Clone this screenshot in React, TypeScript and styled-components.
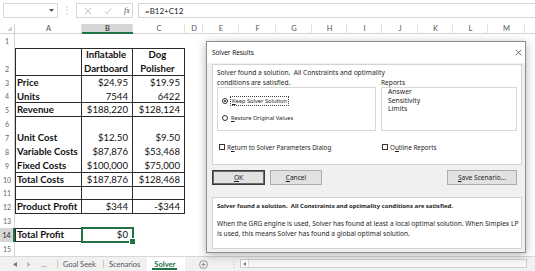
import React from "react";
import styled, { createGlobalStyle, css } from "styled-components";

const GREEN = "#217346";
const LINE = "#2a2a2a";

const GlobalStyle = createGlobalStyle`
  html, body { margin: 0; padding: 0; background: #fff; }
  body { width: 535px; height: 271px; overflow: hidden; }
  * { box-sizing: border-box; }
`;

const Page = styled.div`
  position: relative;
  width: 535px;
  height: 271px;
  overflow: hidden;
  display: flex;
  flex-direction: column;
  background: #fff;
  font-family: Lato, "Liberation Sans", sans-serif;
  color: #111;
`;

/* ---------- formula bar ---------- */
const FormulaBar = styled.div`
  height: 24px;
  flex: none;
  display: flex;
  align-items: flex-start;
  padding: 3px 0 0 3px;
`;
const NameBox = styled.div`
  width: 55px;
  height: 15px;
  border: 1px solid #d6d6d6;
  display: flex;
  align-items: center;
  justify-content: flex-end;
  padding-right: 3px;
`;
const Dots = styled.div`
  width: 18px;
  height: 15px;
  display: flex;
  align-items: center;
  justify-content: center;
`;
const FxBox = styled.div`
  width: 57px;
  height: 15px;
  border: 1px solid #d6d6d6;
  display: flex;
  align-items: center;
  padding-left: 7px;
  gap: 12px;
`;
const FxText = styled.span`
  font-family: "Liberation Serif", serif;
  font-style: italic;
  font-size: 8px;
  color: #555;
  width: 8px;
`;
const FormulaInput = styled.div`
  flex: 1;
  margin-left: 5px;
  height: 15px;
  border: 1px solid #d6d6d6;
  border-right: none;
  display: flex;
  align-items: center;
  padding-left: 6px;
  font-size: 8px;
  color: #222;
`;

/* ---------- sheet grid ---------- */
const COLS = [67, 51, 52, 18, 36, 37, 36, 35, 35, 36, 35, 35, 37, 30];
const LETTERS = "ABCDEFGHIJKLM ".split("");

const Sheet = styled.div`
  flex: none;
  height: 232px;
  display: grid;
  grid-template-columns: 15px ${COLS.map((c) => c + "px").join(" ")};
  grid-template-rows: 10px 14px 27.72px repeat(13, 13.86px);
`;

const Corner = styled.div`
  border-right: 1px solid #d4d4d4;
  border-bottom: 1px solid #d4d4d4;
  display: flex;
  align-items: flex-end;
  justify-content: flex-end;
  padding: 0 2px 2px 0;
`;

const ColHead = styled.div<{ $active?: boolean }>`
  display: flex;
  align-items: center;
  justify-content: center;
  font-size: 7.5px;
  color: #555;
  border-bottom: 1px solid #d4d4d4;
  box-shadow: inset -1px 0 0 #e2e2e2;
  ${(p) =>
    p.$active &&
    css`
      background: #d6d6d6;
      color: #1d1d1d;
      border-bottom: 2px solid ${GREEN};
    `}
`;

const RowHead = styled.div<{ $active?: boolean }>`
  display: flex;
  align-items: flex-end;
  justify-content: center;
  padding-bottom: 2px;
  font-size: 7px;
  line-height: 10px;
  color: #666;
  border-right: 1px solid #d4d4d4;
  ${(p) =>
    p.$active &&
    css`
      background: #d6d6d6;
      color: #222;
      border-right: 2px solid ${GREEN};
    `}
`;

type Edge = { $t?: boolean; $b?: boolean; $l?: boolean; $r?: boolean };
type CellProps = Edge & { $bold?: boolean; $align?: "left" | "right" | "center" };

const edgeShadow = (p: Edge) =>
  [
    p.$t && `inset 0 1px 0 ${LINE}`,
    p.$b && `inset 0 -1px 0 ${LINE}`,
    p.$l && `inset 1px 0 0 ${LINE}`,
    p.$r && `inset -1px 0 0 ${LINE}`,
  ]
    .filter(Boolean)
    .join(", ") || "none";

const Cell = styled.div<CellProps>`
  position: relative;
  display: flex;
  flex-direction: column;
  justify-content: center;
  align-items: ${(p) =>
    p.$align === "right" ? "flex-end" : p.$align === "center" ? "center" : "flex-start"};
  text-align: ${(p) => p.$align || "left"};
  padding: 0 5px 0 2px;
  font-size: 9.6px;
  line-height: 13.86px;
  font-weight: ${(p) => (p.$bold ? 700 : 400)};
  white-space: nowrap;
  box-shadow: ${edgeShadow};
`;

const SelectedCell = styled(Cell)`
  &::after {
    content: "";
    position: absolute;
    left: -1px;
    top: -1px;
    right: -1px;
    bottom: -1px;
    border: 2px solid ${GREEN};
  }
  &::before {
    content: "";
    position: absolute;
    right: -3px;
    bottom: -3px;
    width: 5px;
    height: 5px;
    background: ${GREEN};
    border: 1px solid #fff;
    z-index: 1;
  }
`;

/* ---------- sheet tabs ---------- */
const TabBar = styled.div`
  flex: none;
  height: 15px;
  display: flex;
  align-items: stretch;
  background: #f1f1f1;
  border-top: 1px solid #d6d6d6;
  font-size: 7.5px;
  color: #555;
`;
const Nav = styled.div`
  width: 57px;
  display: flex;
  align-items: center;
  padding-left: 13px;
  gap: 10px;
  color: #777;
`;
const Tab = styled.div<{ $active?: boolean }>`
  display: flex;
  align-items: center;
  padding: 0 7px 0 6px;
  position: relative;
  &::before {
    content: "";
    position: absolute;
    left: 0;
    top: 3px;
    bottom: 3px;
    width: 1px;
    background: #c9c9c9;
  }
  ${(p) =>
    p.$active &&
    css`
      background: #fff;
      color: ${GREEN};
      font-weight: 700;
      padding: 0 10px 0 7px;
      &::before {
        display: none;
      }
      &::after {
        content: "";
        position: absolute;
        left: 5px;
        right: 8px;
        bottom: 1px;
        height: 2px;
        background: ${GREEN};
      }
    `}
`;
const AddSheet = styled.div`
  width: 46px;
  display: flex;
  align-items: center;
  padding-left: 14px;
`;
const ScrollSep = styled.div`
  width: 6px;
  display: flex;
  align-items: center;
  justify-content: center;
  color: #bbb;
  font-size: 8px;
`;
const HScroll = styled.div`
  width: 287px;
  margin: 2px 0 3px 3px;
  border: 1px solid #cfcfcf;
  background: #f7f7f7;
  display: flex;
`;
const ScrollBtn = styled.div`
  width: 8px;
  border-right: 1px solid #dcdcdc;
  background: #fff;
  display: flex;
  align-items: center;
  justify-content: center;
`;

/* ---------- dialog ---------- */
const Dialog = styled.div`
  position: absolute;
  left: 206px;
  top: 41px;
  width: 320px;
  height: 212px;
  background: #f0f0f0;
  border: 1px solid #8d8d8d;
  box-shadow: 0 2px 9px rgba(0, 0, 0, 0.3);
  display: flex;
  flex-direction: column;
  font-family: "Noto Sans", "Open Sans", sans-serif;
  font-size: 6.4px;
  color: #1e1e1e;
`;
const TitleBar = styled.div`
  flex: none;
  height: 21px;
  background: #fff;
  display: flex;
  align-items: center;
  justify-content: space-between;
  padding: 0 3px 0 5px;
  font-size: 6.4px;
  color: #111;
`;
const Body = styled.div`
  flex: 1;
  display: flex;
  flex-direction: column;
  padding: 1px 3px 3px 5px;
`;
const Panel = styled.div<{ $h: number }>`
  flex: none;
  height: ${(p) => p.$h}px;
  background: #fff;
  border: 1px solid #d3d3d3;
  padding: 3px 4px 0 4px;
`;
const Line = styled.div<{ $h?: number; $bold?: boolean; $size?: number; $mt?: number }>`
  line-height: ${(p) => p.$h || 10}px;
  height: ${(p) => p.$h || 10}px;
  white-space: nowrap;
  font-size: ${(p) => p.$size || 6.6}px;
  font-weight: ${(p) => (p.$bold ? 700 : 400)};
  margin-top: ${(p) => p.$mt || 0}px;
`;
const TwoCol = styled.div<{ $mt?: number }>`
  display: grid;
  grid-template-columns: 159px 136px;
  column-gap: 5px;
  margin-top: ${(p) => p.$mt || 0}px;
`;
const GroupBox = styled.div`
  height: 44px;
  border: 1px solid #d8d8d8;
  padding: 8px 0 0 4px;
  display: flex;
  flex-direction: column;
  gap: 7px;
  font-size: 5.7px;
`;
const OptionRow = styled.div`
  height: 10px;
  display: flex;
  align-items: center;
  gap: 3px;
`;
const Radio = styled.span<{ $checked?: boolean }>`
  width: 6px;
  height: 6px;
  border-radius: 50%;
  border: 1px solid #333;
  background: #fff;
  display: inline-flex;
  align-items: center;
  justify-content: center;
  ${(p) =>
    p.$checked &&
    css`
      &::after {
        content: "";
        width: 2px;
        height: 2px;
        border-radius: 50%;
        background: #222;
      }
    `}
`;
const Focus = styled.span`
  outline: 1px dotted #444;
  outline-offset: 0;
  padding: 0 1px;
  line-height: 8px;
`;
const ListBox = styled.div`
  height: 44px;
  border: 1px solid #d8d8d8;
  padding: 0 0 0 6px;
  font-size: 6.8px;
`;
const ListItem = styled.div`
  line-height: 8.5px;
  height: 8.5px;
`;
const CheckRow = styled.div<{ $pl: number }>`
  height: 8px;
  display: flex;
  align-items: center;
  gap: 2px;
  padding-left: ${(p) => p.$pl}px;
  font-size: 6.3px;
`;
const Check = styled.span`
  width: 6px;
  height: 6px;
  border: 1px solid #333;
  background: #fff;
`;
const ButtonRow = styled.div`
  flex: none;
  display: flex;
  margin: 5px 5px 12px 0;
  gap: 5px;
`;
const Button = styled.div<{ $w: number; $default?: boolean; $push?: boolean }>`
  width: ${(p) => p.$w}px;
  height: 15px;
  background: #e1e1e1;
  border: 1px solid #adadad;
  display: flex;
  align-items: center;
  justify-content: center;
  font-size: 6.6px;
  color: #1e1e1e;
  ${(p) => p.$push && css`margin-left: auto;`}
  ${(p) =>
    p.$default &&
    css`
      border-color: #3a3a3a;
      box-shadow: inset 0 0 0 1px #6a6a6a;
    `}
`;

const XIcon = ({ size = 7, color = "#444", w = 0.8 }: { size?: number; color?: string; w?: number }) => (
  <svg width={size} height={size} viewBox="0 0 10 10">
    <path d="M1 1L9 9M9 1L1 9" stroke={color} strokeWidth={w * (10 / size)} fill="none" />
  </svg>
);

type Def = { text?: React.ReactNode; bold?: boolean; align?: "left" | "right" | "center"; t?: boolean; b?: boolean; l?: boolean; r?: boolean };

const tableRow = (a: string, b: string, c: string, bottom = false): Def[] => [
  { text: a, bold: true, l: true, r: true, b: bottom },
  { text: b, align: "right", r: true, b: bottom },
  { text: c, align: "right", r: true, b: bottom },
];

const ROWS: { n: number; cells: Def[] }[] = [
  { n: 1, cells: [] },
  {
    n: 2,
    cells: [
      { t: true, b: true, l: true, r: true },
      { text: <span>Inflatable<br />Dartboard</span>, bold: true, align: "center", t: true, b: true, r: true },
      { text: <span>Dog<br />Polisher</span>, bold: true, align: "center", t: true, b: true, r: true },
    ],
  },
  { n: 3, cells: tableRow("Price", "$24.95", "$19.95") },
  { n: 4, cells: tableRow("Units", "7544", "6422", true) },
  { n: 5, cells: tableRow("Revenue", "$188,220", "$128,124", true) },
  { n: 6, cells: tableRow("", "", "") },
  { n: 7, cells: tableRow("Unit Cost", "$12.50", "$9.50") },
  { n: 8, cells: tableRow("Variable Costs", "$87,876", "$53,468") },
  { n: 9, cells: tableRow("Fixed Costs", "$100,000", "$75,000", true) },
  { n: 10, cells: tableRow("Total Costs", "$187,876", "$128,468", true) },
  { n: 11, cells: tableRow("", "", "", true) },
  { n: 12, cells: tableRow("Product Profit", "$344", "-$344", true) },
  { n: 13, cells: [] },
  { n: 14, cells: [{ text: "Total Profit", bold: true, t: true, b: true, l: true, r: true }] },
  { n: 15, cells: [] },
];

export default function App() {
  return (
    <Page>
      <GlobalStyle />
      <FormulaBar>
        <NameBox>
          <svg width="5" height="3" viewBox="0 0 5 3">
            <path d="M0 0H5L2.5 3Z" fill="#555" />
          </svg>
        </NameBox>
        <Dots>
          <svg width="2" height="9" viewBox="0 0 2 9">
            <circle cx="1" cy="1" r="0.7" fill="#bbb" />
            <circle cx="1" cy="4.5" r="0.7" fill="#bbb" />
            <circle cx="1" cy="8" r="0.7" fill="#bbb" />
          </svg>
        </Dots>
        <FxBox>
          <XIcon size={8} color="#bdbdbd" w={0.9} />
          <svg width="8" height="8" viewBox="0 0 10 10">
            <path d="M1 5.5L3.8 8.5L9 1.5" stroke="#bdbdbd" strokeWidth="1.1" fill="none" />
          </svg>
          <FxText>fx</FxText>
        </FxBox>
        <FormulaInput>=B12+C12</FormulaInput>
      </FormulaBar>

      <Sheet>
        <Corner>
          <svg width="5" height="5" viewBox="0 0 5 5">
            <path d="M5 0V5H0Z" fill="#d0d0d0" />
          </svg>
        </Corner>
        {LETTERS.map((l, i) => (
          <ColHead key={i} $active={l === "B"}>
            {l.trim()}
          </ColHead>
        ))}
        {ROWS.map((row) => (
          <React.Fragment key={row.n}>
            <RowHead $active={row.n === 14}>{row.n}</RowHead>
            {LETTERS.map((l, i) => {
              if (row.n === 14 && i === 1) {
                return (
                  <SelectedCell key={i} $align="right">
                    $0
                  </SelectedCell>
                );
              }
              const d = row.cells[i] || {};
              return (
                <Cell key={i} $bold={d.bold} $align={d.align} $t={d.t} $b={d.b} $l={d.l} $r={d.r}>
                  {d.text}
                </Cell>
              );
            })}
          </React.Fragment>
        ))}
      </Sheet>

      <TabBar>
        <Nav>
          <svg width="4" height="5" viewBox="0 0 4 5">
            <path d="M4 0V5L0 2.5Z" fill="#777" />
          </svg>
          <svg width="4" height="5" viewBox="0 0 4 5">
            <path d="M0 0V5L4 2.5Z" fill="#bbb" />
          </svg>
          <span>...</span>
        </Nav>
        <Tab>Goal Seek</Tab>
        <Tab>Scenarios</Tab>
        <Tab $active>Solver</Tab>
        <AddSheet>
          <svg width="9" height="9" viewBox="0 0 10 10">
            <circle cx="5" cy="5" r="4.4" stroke="#777" strokeWidth="0.8" fill="none" />
            <path d="M5 2.6V7.4M2.6 5H7.4" stroke="#777" strokeWidth="0.8" />
          </svg>
        </AddSheet>
        <ScrollSep>⋮</ScrollSep>
        <HScroll>
          <ScrollBtn>
            <svg width="3" height="4" viewBox="0 0 3 4">
              <path d="M3 0V4L0 2Z" fill="#777" />
            </svg>
          </ScrollBtn>
        </HScroll>
      </TabBar>

      <Dialog>
        <TitleBar>
          <span>Solver Results</span>
          <XIcon size={7} color="#333" w={0.7} />
        </TitleBar>
        <Body>
          <Panel $h={101}>
            <Line>Solver found a solution.&nbsp; All Constraints and optimality</Line>
            <TwoCol>
              <Line $h={9}>conditions are satisfied.</Line>
              <Line $h={9}>Reports</Line>
            </TwoCol>
            <TwoCol>
              <GroupBox>
                <OptionRow>
                  <Radio $checked />
                  <Focus>
                    <u>K</u>eep Solver Solution
                  </Focus>
                </OptionRow>
                <OptionRow>
                  <Radio />
                  <span>
                    <u>R</u>estore Original Values
                  </span>
                </OptionRow>
              </GroupBox>
              <ListBox>
                <ListItem>Answer</ListItem>
                <ListItem>Sensitivity</ListItem>
                <ListItem>Limits</ListItem>
              </ListBox>
            </TwoCol>
            <TwoCol $mt={12}>
              <CheckRow $pl={2}>
                <Check />
                <span>
                  R<u>e</u>turn to Solver Parameters Dialog
                </span>
              </CheckRow>
              <CheckRow $pl={1}>
                <Check />
                <span>
                  O<u>u</u>tline Reports
                </span>
              </CheckRow>
            </TwoCol>
          </Panel>
          <ButtonRow>
            <Button $w={53} $default>
              <span>
                <u>O</u>K
              </span>
            </Button>
            <Button $w={52}>
              <span>
                <u>C</u>ancel
              </span>
            </Button>
            <Button $w={70} $push>
              <span>
                <u>S</u>ave Scenario...
              </span>
            </Button>
          </ButtonRow>
          <Panel $h={52}>
            <Line $bold $size={6}>
              Solver found a solution.&nbsp; All Constraints and optimality conditions are satisfied.
            </Line>
            <Line $mt={8}>
              When the GRG engine is used, Solver has found at least a local optimal solution. When Simplex LP
            </Line>
            <Line>is used, this means Solver has found a global optimal solution.</Line>
          </Panel>
        </Body>
      </Dialog>
    </Page>
  );
}
